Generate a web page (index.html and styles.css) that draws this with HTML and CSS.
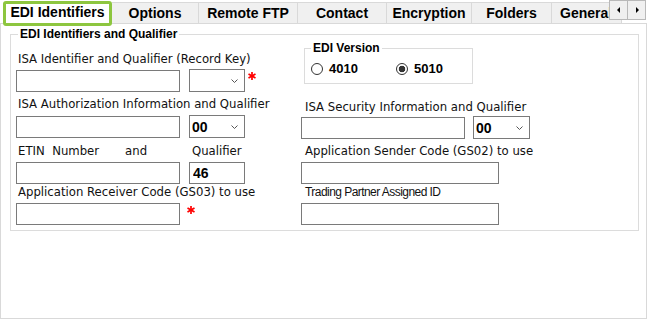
FILE: index.html
```html
<!DOCTYPE html>
<html lang="en">
<head>
  <meta charset="UTF-8">
  <meta name="viewport" content="width=device-width, initial-scale=1.0">
  <title>Trading Partner - EDI Identifiers</title>
  <link rel="stylesheet" href="styles.css">
</head>
<body>
  <div class="tabs">
    <div class="tab active">EDI Identifiers</div>
    <div class="tab t-options">Options</div>
    <div class="tab t-ftp">Remote FTP</div>
    <div class="tab t-contact">Contact</div>
    <div class="tab t-enc">Encryption</div>
    <div class="tab t-folders">Folders</div>
    <div class="tab t-general">General</div>
    <div class="scroller">
      <button class="scroll-btn" type="button">
        <svg width="4" height="6" viewBox="0 0 4 6"><polygon points="3,0 3,6 0,3" fill="#000"/></svg>
      </button>
      <button class="scroll-btn" type="button">
        <svg width="4" height="6" viewBox="0 0 4 6"><polygon points="1,0 1,6 4,3" fill="#000"/></svg>
      </button>
    </div>
  </div>

  <div class="panel">
    <fieldset class="group">
      <legend>EDI Identifiers and Qualifier</legend>
      <div class="cols">

        <div class="col">
          <label class="lbl l-first" for="isaId">ISA Identifier and Qualifier (Record Key)</label>
          <div class="row">
            <input class="txt" id="isaId" type="text">
            <div class="combo"><span></span>
              <svg width="7" height="4" viewBox="0 0 7 4"><polyline points="0.5,0.5 3.5,3.5 6.5,0.5" fill="none" stroke="#555" stroke-width="1"/></svg>
            </div>
            <svg class="req" width="8" height="8" viewBox="0 0 8 8"><g stroke="#f00" stroke-width="1.7"><line x1="4" y1="0" x2="4" y2="8"/><line x1="0.5" y1="2" x2="7.5" y2="6"/><line x1="0.5" y1="6" x2="7.5" y2="2"/></g></svg>
          </div>

          <label class="lbl l-auth" for="isaAuth">ISA Authorization Information and Qualifier</label>
          <div class="row r-auth">
            <input class="txt" id="isaAuth" type="text">
            <div class="combo"><span>00</span>
              <svg width="7" height="4" viewBox="0 0 7 4"><polyline points="0.5,0.5 3.5,3.5 6.5,0.5" fill="none" stroke="#555" stroke-width="1"/></svg>
            </div>
          </div>

          <div class="lbl l-etin">
            <span class="etin">ETIN  Number       and</span>
            <span class="qual">Qualifier</span>
          </div>
          <div class="row r-etin">
            <input class="txt" type="text">
            <input class="txt short" type="text" value="46">
          </div>

          <label class="lbl l-recv" for="recv">Application Receiver Code (GS03) to use</label>
          <div class="row r-recv">
            <input class="txt" id="recv" type="text">
            <svg class="req req-wide" width="8" height="8" viewBox="0 0 8 8"><g stroke="#f00" stroke-width="1.7"><line x1="4" y1="0" x2="4" y2="8"/><line x1="0.5" y1="2" x2="7.5" y2="6"/><line x1="0.5" y1="6" x2="7.5" y2="2"/></g></svg>
          </div>
        </div>

        <div class="col">
          <fieldset class="version">
            <legend>EDI Version</legend>
            <div class="radios">
              <label class="radio r-4010"><input type="radio" name="ver">4010</label>
              <label class="radio"><input type="radio" name="ver" checked>5010</label>
            </div>
          </fieldset>

          <label class="lbl l-sec" for="isaSec">ISA Security Information and Qualifier</label>
          <div class="row r-sec">
            <input class="txt" id="isaSec" type="text">
            <div class="combo wide"><span>00</span>
              <svg width="7" height="4" viewBox="0 0 7 4"><polyline points="0.5,0.5 3.5,3.5 6.5,0.5" fill="none" stroke="#555" stroke-width="1"/></svg>
            </div>
          </div>

          <label class="lbl l-send" for="send">Application Sender Code (GS02) to use</label>
          <div class="row r-send">
            <input class="txt long" id="send" type="text">
          </div>

          <label class="lbl l-tp" for="tpid">Trading Partner Assigned ID</label>
          <div class="row r-tp">
            <input class="txt long" id="tpid" type="text">
          </div>
        </div>

      </div>
    </fieldset>
  </div>
</body>
</html>
```

FILE: styles.css
```css
body {
  margin: 0;
  width: 648px; height: 320px; overflow: hidden;
  background: #fff; color: #111;
  font-family: "DejaVu Sans", Verdana, sans-serif;
}

/* tab strip */
.tabs { position: relative; display: flex; height: 23px; }
.tab {
  box-sizing: border-box; flex: none;
  margin-top: 2px; height: 21px;
  background: #f0f0f0; border-top: 1px solid #d9d9d9; border-right: 1px solid #d9d9d9;
  font: bold 14px "Liberation Sans", Arial, sans-serif; line-height: 20px;
  text-align: center; white-space: nowrap; overflow: hidden; color: #000;
}
.tab.active {
  position: relative; z-index: 1;
  margin: 1px 0 0 3px; width: 109px; height: 25px;
  border: 3px solid #8dc63f; border-radius: 3px;
  background: #fff; line-height: 16px;
}
.t-options { width: 87px; }
.t-ftp { width: 99px; }
.t-contact { width: 89px; }
.t-enc { width: 85px; }
.t-folders { width: 80px; }
.t-general { width: 70px; text-align: left; padding-left: 8px; }
.scroller { position: absolute; left: 609px; top: 0; display: flex; z-index: 2; }
.scroll-btn {
  box-sizing: border-box; width: 19px; height: 20px; margin: 0 -1px 0 0; padding: 0;
  background: #f0f0f0; border: 1px solid #b9b9b9;
  display: flex; align-items: center; justify-content: center;
}

/* page */
.panel {
  box-sizing: border-box; width: 647px; height: 296px;
  border: 1px solid #d9d9d9; background: #fff;
}
.group {
  margin: 3px 7px 0 9px; padding: 0 0 5px 5px; min-width: 0;
  border: 1px solid #dcdcdc;
}
.group > legend, .version > legend {
  padding: 0 2px; line-height: 14px;
  font: bold 12px "Liberation Sans", Arial, sans-serif; color: #000;
}
.group > legend { margin-left: 2px; }
.cols { display: grid; grid-template-columns: 285px 1fr; }
.col { display: flex; flex-direction: column; align-items: flex-start; }

.lbl { display: block; padding-left: 2px; font-size: 11.7px; line-height: 14px; color: #111; }
.l-first { margin-top: 11px; }
.l-auth { margin-top: 5px; }
.l-etin { margin-top: 6px; display: flex; }
.etin { width: 171px; white-space: pre; }
.qual { padding-left: 3px; }
.l-recv { margin-top: 1px; }
.l-sec { margin-top: 16px; margin-left: 2px; }
.l-send { margin-top: 5px; margin-left: 2px; }
.l-tp {
  margin-top: 1px; margin-left: 2px;
  font: 12px "Liberation Sans", Arial, sans-serif; letter-spacing: -0.55px; line-height: 14px;
}

.row { display: flex; align-items: flex-end; gap: 9px; margin-top: 3px; }
.r-auth { margin-top: 4px; }
.r-etin, .r-recv, .r-send, .r-tp { margin-top: 4px; }
.r-sec { margin-top: 2px; gap: 8px; }

.txt {
  box-sizing: border-box; display: block; margin: 0;
  width: 164px; height: 22px; padding: 0 3px;
  border: 1px solid #7a7a7a; background: #fff; outline: none;
  font: bold 14px "Liberation Sans", Arial, sans-serif; color: #000;
}
.txt.short { width: 56px; }
.txt.long { width: 198px; }
.combo {
  box-sizing: border-box; width: 56px; height: 23px;
  display: flex; align-items: center; justify-content: space-between;
  padding: 0 6px 0 2px; border: 1px solid #7a7a7a; background: #fff;
  font: bold 14px "Liberation Sans", Arial, sans-serif; color: #000;
}
.combo.wide { width: 57px; }
.req { align-self: flex-start; margin: 3px 0 0 -6px; }
.req-wide { margin-left: -2px; }

/* EDI version box */
.version {
  box-sizing: border-box; width: 169px; margin: 0 0 0 3px;
  padding: 0 0 8px 6px; border: 1px solid #dcdcdc; min-width: 0;
}
.radios { display: flex; align-items: center; height: 12px; margin-top: 8px; }
.radio {
  display: flex; align-items: center; gap: 6px;
  font: bold 13px "Liberation Sans", Arial, sans-serif; line-height: 12px; color: #000;
}
.r-4010 { width: 85px; }
.radio input {
  appearance: none; -webkit-appearance: none; margin: 0;
  width: 12px; height: 12px; border: 1px solid #333; border-radius: 50%; background: #fff;
}
.radio input:checked { background: radial-gradient(circle, #333 0 3px, #fff 3.6px); }
```
